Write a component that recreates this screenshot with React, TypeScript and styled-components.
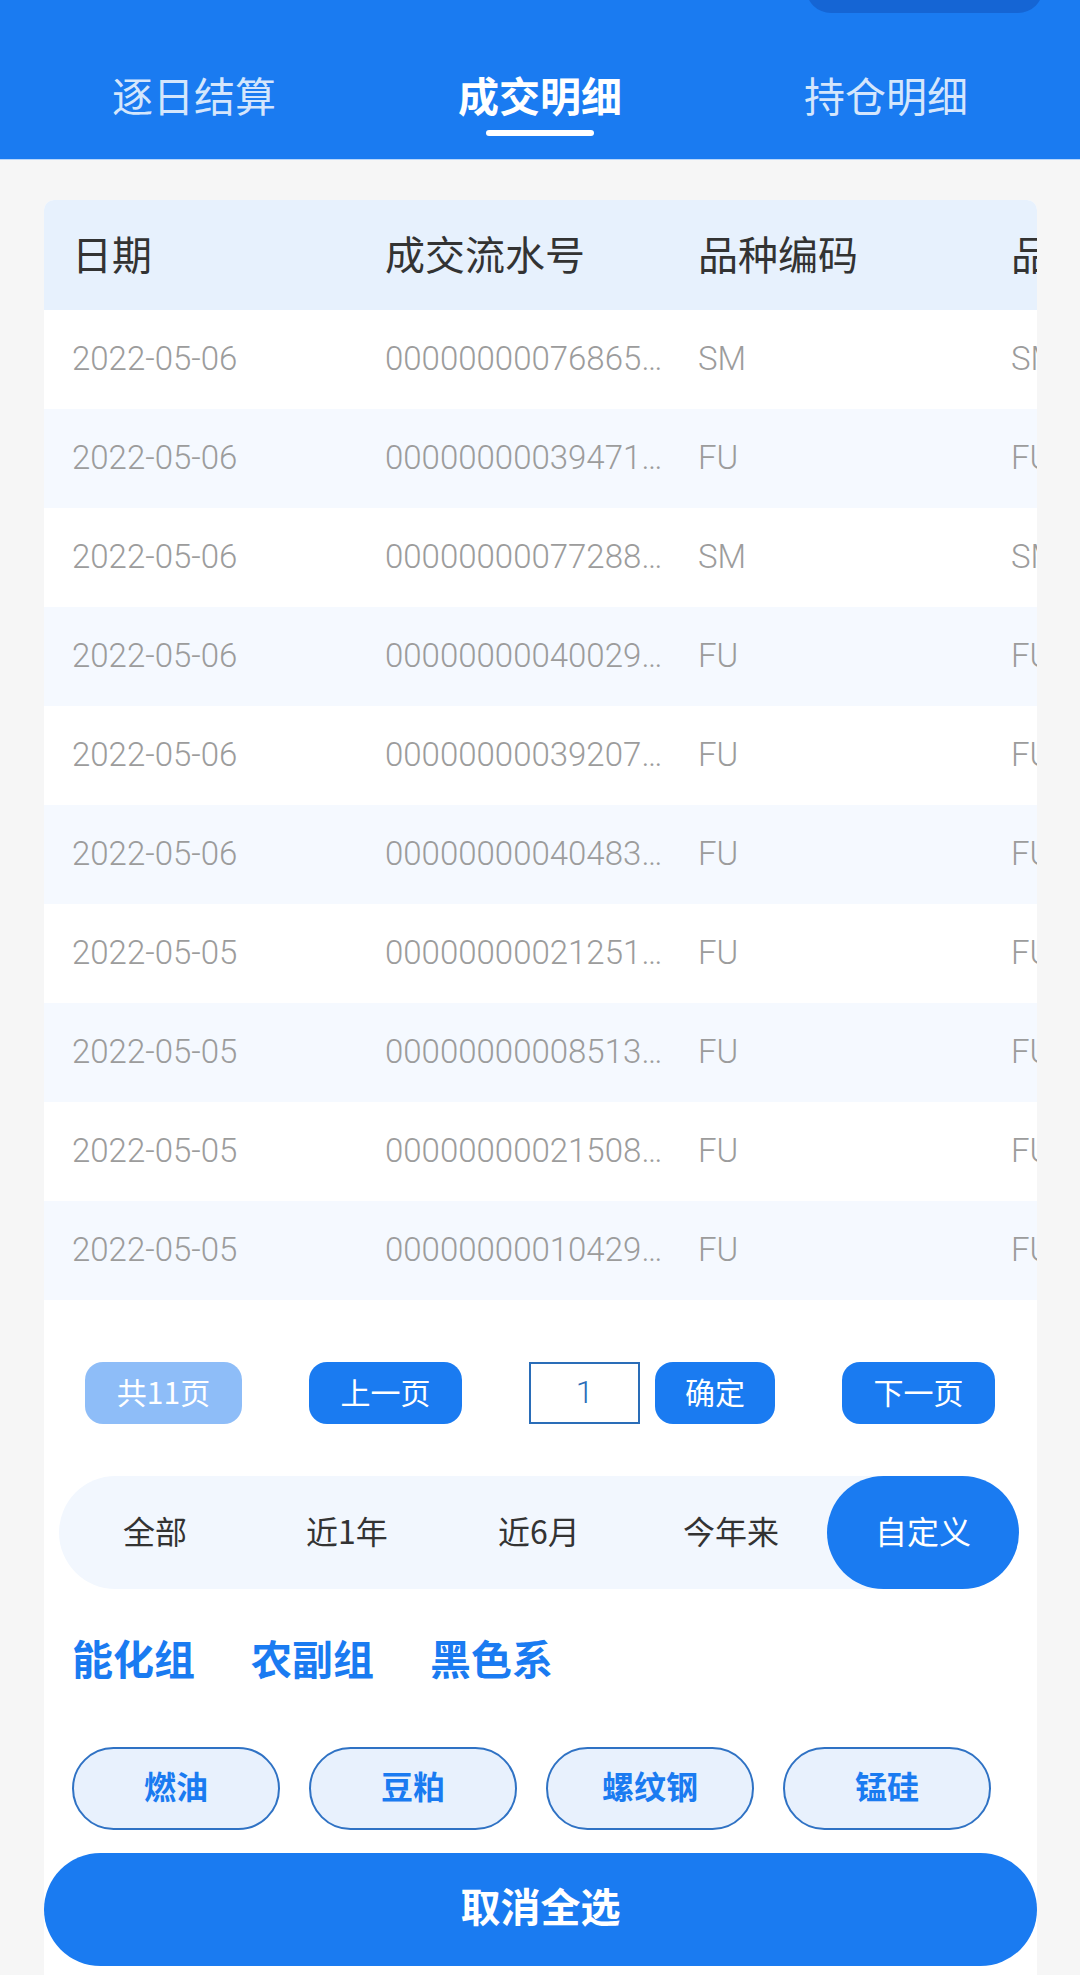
import React, { useState } from 'react';
import styled, { createGlobalStyle } from 'styled-components';

const BLUE = '#1a7bf1';
const CJK = '"Noto Sans CJK SC", "Noto Sans", sans-serif';
const NUM = 'Roboto, "Noto Sans CJK SC", sans-serif';

const GlobalStyle = createGlobalStyle`
  body {
    margin: 0;
    background: #f6f6f6;
    font-family: ${CJK};
  }
  * { box-sizing: border-box; }
`;

type RowType = {
  date: string;
  serial: string;
  code: string;
};

const ROWS: Array<RowType> = [
  { date: '2022-05-06', serial: '000000000768653312', code: 'SM' },
  { date: '2022-05-06', serial: '000000000394712208', code: 'FU' },
  { date: '2022-05-06', serial: '000000000772881645', code: 'SM' },
  { date: '2022-05-06', serial: '000000000400297731', code: 'FU' },
  { date: '2022-05-06', serial: '000000000392075526', code: 'FU' },
  { date: '2022-05-06', serial: '000000000404831190', code: 'FU' },
  { date: '2022-05-05', serial: '000000000212514473', code: 'FU' },
  { date: '2022-05-05', serial: '000000000085139962', code: 'FU' },
  { date: '2022-05-05', serial: '000000000215086617', code: 'FU' },
  { date: '2022-05-05', serial: '000000000104295584', code: 'FU' },
];

const TABS = ['逐日结算', '成交明细', '持仓明细'];
const PERIODS = ['全部', '近1年', '近6月', '今年来', '自定义'];
const GROUPS = ['能化组', '农副组', '黑色系'];
const CHIPS = ['燃油', '豆粕', '螺纹钢', '锰硅'];

export default function App() {
  const [tab, setTab] = useState(1);
  const [period, setPeriod] = useState(4);
  const [page, setPage] = useState('1');

  return (
    <Page>
      <GlobalStyle />
      <TopStrip>
        <TopPill />
      </TopStrip>
      <TabBar>
        {TABS.map((label, i) => (
          <Tab key={label} onClick={() => setTab(i)}>
            <TabLabel active={i === tab}>{label}</TabLabel>
            <TabLine active={i === tab} />
          </Tab>
        ))}
      </TabBar>

      <Content>
        <Card>
          <Table>
            <HeadRow>
              <HeadCell>日期</HeadCell>
              <HeadCell>成交流水号</HeadCell>
              <HeadCell>品种编码</HeadCell>
              <HeadCell>品种名称</HeadCell>
            </HeadRow>
            {ROWS.map((row, i) => (
              <Row key={i} striped={i % 2 === 1}>
                <Cell>{row.date}</Cell>
                <Cell>{row.serial}</Cell>
                <Cell>{row.code}</Cell>
                <Cell>{row.code}</Cell>
              </Row>
            ))}
          </Table>

          <Pager>
            <PageButton muted>共11页</PageButton>
            <PageButton>上一页</PageButton>
            <JumpGroup>
              <PageInput value={page} onChange={(e) => setPage(e.target.value)} />
              <PageButton narrow>确定</PageButton>
            </JumpGroup>
            <PageButton>下一页</PageButton>
          </Pager>

          <Segments>
            {PERIODS.map((label, i) => (
              <Segment key={label} active={i === period} onClick={() => setPeriod(i)}>
                {label}
              </Segment>
            ))}
          </Segments>

          <Groups>
            {GROUPS.map((g) => (
              <GroupTab key={g}>{g}</GroupTab>
            ))}
          </Groups>

          <Chips>
            {CHIPS.map((c) => (
              <Chip key={c}>{c}</Chip>
            ))}
          </Chips>

          <FooterButton>取消全选</FooterButton>
        </Card>
      </Content>
    </Page>
  );
}

const Page = styled.div`
  width: 1080px;
  min-height: 1975px;
  background: #f6f6f6;
  overflow: hidden;
`;

const TopStrip = styled.div`
  height: 13px;
  background: ${BLUE};
  display: flex;
  justify-content: flex-end;
  align-items: flex-end;
  padding-right: 37px;
  overflow: hidden;
`;

const TopPill = styled.div`
  width: 237px;
  height: 50px;
  flex-shrink: 0;
  border-radius: 25px;
  background: #1565d4;
`;

const TabBar = styled.div`
  height: 147px;
  background: ${BLUE};
  border-bottom: 1px solid #b7d6fb;
  display: grid;
  grid-template-columns: repeat(3, 346px);
  padding: 53px 21px 0;
`;

const Tab = styled.div`
  display: flex;
  flex-direction: column;
  align-items: center;
  cursor: pointer;
`;

const TabLabel = styled.div<{ active?: boolean }>`
  font-size: 41px;
  line-height: 56px;
  color: ${(p) => (p.active ? '#ffffff' : 'rgba(255, 255, 255, 0.82)')};
  font-weight: ${(p) => (p.active ? 700 : 400)};
`;

const TabLine = styled.div<{ active?: boolean }>`
  width: 108px;
  height: 6px;
  margin-top: 8px;
  border-radius: 3px;
  background: ${(p) => (p.active ? '#ffffff' : 'transparent')};
`;

const Content = styled.div`
  padding: 40px 43px 0 44px;
`;

const Card = styled.div`
  background: #ffffff;
  border-radius: 10px 10px 0 0;
  min-height: 1775px;
  overflow: hidden;
  padding-bottom: 9px;
`;

const Table = styled.div`
  overflow: hidden;
`;

const HeadRow = styled.div`
  display: flex;
  height: 110px;
  align-items: center;
  padding-bottom: 5px;
  background: #e7f1fd;
`;

const HeadCell = styled.div`
  flex: 0 0 313px;
  padding: 0 4px 0 28px;
  font-size: 40px;
  color: #333333;
  white-space: nowrap;
  overflow: hidden;
`;

const Row = styled.div<{ striped?: boolean }>`
  display: flex;
  height: 99px;
  align-items: center;
  padding-bottom: 2px;
  background: ${(p) => (p.striped ? '#f5f9ff' : '#ffffff')};
`;

const Cell = styled.div`
  flex: 0 0 313px;
  padding: 0 2px 0 28px;
  font-family: ${NUM};
  font-size: 33px;
  font-weight: 300;
  color: #9c9c9c;
  white-space: nowrap;
  overflow: hidden;
  text-overflow: ellipsis;
`;

const Pager = styled.div`
  display: flex;
  justify-content: space-between;
  align-items: center;
  margin-top: 62px;
  padding: 0 42px 0 41px;
`;

const JumpGroup = styled.div`
  display: flex;
  gap: 15px;
`;

const PageButton = styled.button<{ muted?: boolean; narrow?: boolean }>`
  width: ${(p) => (p.muted ? 157 : p.narrow ? 120 : 153)}px;
  height: 62px;
  border: none;
  border-radius: 18px;
  background: ${(p) => (p.muted ? '#8ebdf8' : BLUE)};
  color: #ffffff;
  font-family: ${CJK};
  font-size: 30px;
  padding: 0 0 4px;
  cursor: pointer;
`;

const PageInput = styled.input`
  width: 111px;
  height: 62px;
  border: 2px solid #2a6db8;
  border-radius: 0;
  background: #ffffff;
  color: #2a6db8;
  font-family: ${NUM};
  font-size: 32px;
  font-weight: 300;
  text-align: center;
  padding: 0 0 2px;
  outline: none;
`;

const Segments = styled.div`
  display: flex;
  width: 960px;
  height: 113px;
  margin: 52px 0 0 15px;
  border-radius: 57px;
  background: #f2f7fe;
`;

const Segment = styled.div<{ active?: boolean }>`
  flex: 0 0 192px;
  display: flex;
  align-items: center;
  justify-content: center;
  padding-bottom: 5px;
  border-radius: 57px;
  font-size: 32px;
  color: ${(p) => (p.active ? '#ffffff' : '#333333')};
  background: ${(p) => (p.active ? BLUE : 'transparent')};
  cursor: pointer;
`;

const Groups = styled.div`
  display: flex;
  gap: 56px;
  margin-top: 40px;
  padding-left: 28px;
`;

const GroupTab = styled.div`
  font-size: 41px;
  line-height: 56px;
  font-weight: 700;
  color: ${BLUE};
`;

const Chips = styled.div`
  display: flex;
  gap: 29px;
  margin-top: 62px;
  padding-left: 28px;
`;

const Chip = styled.div`
  width: 208px;
  height: 83px;
  display: flex;
  align-items: center;
  justify-content: center;
  padding-bottom: 7px;
  border: 2px solid #2f72c4;
  border-radius: 42px;
  background: #e8f1fd;
  color: ${BLUE};
  font-size: 32px;
  font-weight: 700;
`;

const FooterButton = styled.button`
  display: block;
  width: 100%;
  height: 113px;
  margin-top: 23px;
  padding: 0 0 9px;
  border: none;
  border-radius: 57px;
  background: ${BLUE};
  color: #ffffff;
  font-family: ${CJK};
  font-size: 40px;
  font-weight: 700;
  cursor: pointer;
`;
